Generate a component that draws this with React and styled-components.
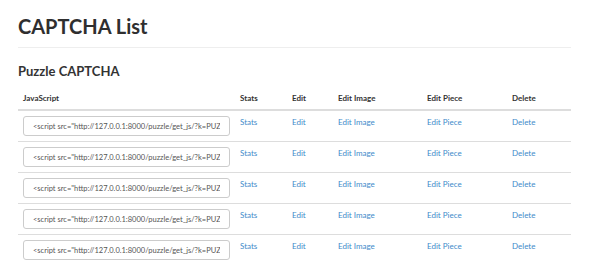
import React from "react";
import styled, { createGlobalStyle } from "styled-components";

const GlobalStyle = createGlobalStyle`
  body {
    margin: 0;
    background: #ffffff;
    font-family: Lato, "Open Sans", sans-serif;
    color: #333333;
  }
`;

const Page = styled.div`
  padding: 12px 19px 0 18px;
`;

const Title = styled.h1`
  margin: 0;
  font-size: 20px;
  font-weight: 700;
  line-height: 28px;
  color: #2f2f2f;
`;

const Rule = styled.hr`
  margin: 7px 0 0;
  border: 0;
  border-top: 1px solid #eeeeee;
`;

const Subtitle = styled.h2`
  margin: 14px 0 0;
  font-size: 13px;
  font-weight: 700;
  line-height: 18px;
  color: #333333;
`;

const Table = styled.table`
  width: 100%;
  margin-top: 8px;
  border-collapse: collapse;
  font-size: 8px;
`;

const Th = styled.th`
  text-align: left;
  font-weight: 700;
  padding: 5px;
  line-height: 11px;
  border-bottom: 2px solid #dddddd;
  width: ${(p) => p.w || "auto"};
`;

const Row = styled.tr`
  & + & td {
    border-top: 1px solid #dddddd;
  }
`;

const Td = styled.td`
  padding: 5px;
  vertical-align: top;
  line-height: 11px;
`;

const CodeInput = styled.input`
  box-sizing: border-box;
  display: block;
  width: 207px;
  height: 20px;
  padding: 0 9px;
  border: 1px solid #cccccc;
  border-radius: 3px;
  font-family: Lato, "Open Sans", sans-serif;
  font-size: 7.5px;
  color: #555555;
  background: #ffffff;
  outline: none;
`;

const Link = styled.a`
  display: inline-block;
  margin-top: 1px;
  color: #428bca;
  text-decoration: none;
  font-size: 8px;
`;

const snippet =
  '<script src="http://127.0.0.1:8000/puzzle/get_js/?k=PUZZLE_KEY"></script>';

const rows = [1, 2, 3, 4, 5];

export default function App() {
  return (
    <Page>
      <GlobalStyle />
      <Title>CAPTCHA List</Title>
      <Rule />
      <Subtitle>Puzzle CAPTCHA</Subtitle>
      <Table>
        <thead>
          <tr>
            <Th w="207px">JavaScript</Th>
            <Th w="42px">Stats</Th>
            <Th w="36px">Edit</Th>
            <Th w="79px">Edit Image</Th>
            <Th w="75px">Edit Piece</Th>
            <Th>Delete</Th>
          </tr>
        </thead>
        <tbody>
          {rows.map((r) => (
            <Row key={r}>
              <Td>
                <CodeInput readOnly value={snippet} />
              </Td>
              <Td>
                <Link href="#">Stats</Link>
              </Td>
              <Td>
                <Link href="#">Edit</Link>
              </Td>
              <Td>
                <Link href="#">Edit Image</Link>
              </Td>
              <Td>
                <Link href="#">Edit Piece</Link>
              </Td>
              <Td>
                <Link href="#">Delete</Link>
              </Td>
            </Row>
          ))}
        </tbody>
      </Table>
    </Page>
  );
}
